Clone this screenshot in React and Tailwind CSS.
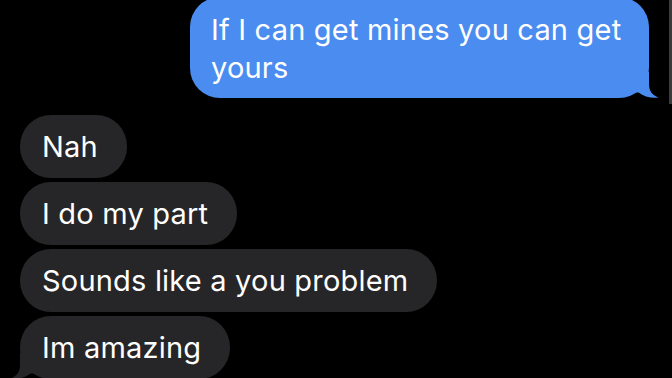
import React from "react";

const received = ["Nah", "I do my part", "Sounds like a you problem", "Im amazing"];

function BlueTail() {
  return (
    <svg
      className="absolute right-[-10px] bottom-0"
      width="31"
      height="26"
      viewBox="0 0 31 26"
    >
      <path
        d="M0 0 L21 0 L21 12 C21 19 24 23 30.5 25.5 C24 26.5 16 25 10.5 20.5 L0 20.5 Z"
        fill="#4a8cf0"
      />
    </svg>
  );
}

function GrayTail() {
  return (
    <svg
      className="absolute left-[-10px] bottom-0"
      width="31"
      height="26"
      viewBox="0 0 31 26"
    >
      <path
        d="M31 0 L10 0 L10 12 C10 19 7 23 0.5 25.5 C7 26.5 15 25 20.5 20.5 L31 20.5 Z"
        fill="#262628"
      />
    </svg>
  );
}

export default function App() {
  return (
    <div className="relative h-[378px] w-[672px] overflow-hidden bg-black font-['Inter',sans-serif] text-white">
      {/* sent */}
      <div className="flex justify-end pr-[23px] -mt-[3px]">
        <div className="relative h-[101px] w-[459px] rounded-[30px] bg-[#4a8cf0] pl-[21px] pr-[20px] pt-[14px] text-[29px] leading-[38px] tracking-[0.2px]">
          If I can get mines you can get yours
          <BlueTail />
        </div>
      </div>

      {/* received */}
      <div className="mt-[17px] flex flex-col items-start gap-[4px] pl-[20px]">
        {received.map((text, i) => (
          <div
            key={i}
            className="relative flex h-[63px] items-center rounded-[31px] bg-[#262628] pl-[22px] pr-[29px] text-[29px] tracking-[0.2px]"
          >
            {text}
            {i === received.length - 1 && <GrayTail />}
          </div>
        ))}
      </div>

      <div className="absolute right-0 top-0 h-[104px] w-[3px] bg-[#3b3b3d]" />
    </div>
  );
}
